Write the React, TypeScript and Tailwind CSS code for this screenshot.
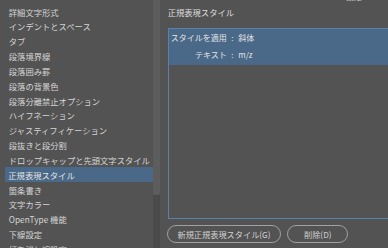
import React from "react";

const items = [
  "詳細文字形式",
  "インデントとスペース",
  "タブ",
  "段落境界線",
  "段落囲み罫",
  "段落の背景色",
  "段落分離禁止オプション",
  "ハイフネーション",
  "ジャスティフィケーション",
  "段抜きと段分割",
  "ドロップキャップと先頭文字スタイル",
  "正規表現スタイル",
  "箇条書き",
  "文字カラー",
  "OpenType 機能",
  "下線設定",
  "打ち消し線設定",
];

export default function App() {
  return (
    <div className="w-[388px] h-[248px] overflow-hidden bg-[#535353] flex font-['Noto_Sans_CJK_JP','Noto_Sans',sans-serif] text-[#d4d4d4]">
      {/* left list */}
      <div className="w-[152.7px] shrink-0 pt-[4.3px] flex flex-col">
        {items.map((t) => {
          const sel = t === "正規表現スタイル";
          return (
            <div
              key={t}
              className={
                sel
                  ? "h-[14.84px] shrink-0 ml-[5px] pl-[3.3px] flex items-center text-[8.3px] leading-none whitespace-nowrap bg-[#4a6888] text-[#e4e4e4]"
                  : "h-[14.84px] shrink-0 ml-[5px] pl-[3.8px] flex items-center text-[8.3px] leading-none whitespace-nowrap"
              }
            >
              {t}
            </div>
          );
        })}
      </div>
      {/* scrollbar */}
      <div className="w-[7.3px] shrink-0 flex flex-col">
        <div className="h-[195px] shrink-0 bg-[#5d5d5d] rounded-b-[3.5px]" />
        <div className="flex-1 bg-[#4a4a4a]" />
      </div>
      {/* right panel */}
      <div className="flex-1 min-w-0 pl-[7.7px] flex flex-col">
        <div className="h-[27.7px] shrink-0 flex items-start">
          <div className="pt-[7px] text-[8.3px] leading-[11.4px] whitespace-nowrap text-[#dedede]">
            正規表現スタイル
          </div>
          <span className="ml-auto mr-[26px] -mt-[7.5px] text-[8px] leading-[8px] whitespace-nowrap text-[#bdbdbd]">
            設定
          </span>
        </div>
        <div className="w-[240px] h-[191.3px] shrink-0 border border-[#5b80aa]">
          <div className="h-[36.3px] bg-[#4a6888] pt-[0.4px] pl-[2px] text-[8px] text-[#e4e4e4]">
            <div className="h-[17.3px] flex items-center leading-none whitespace-nowrap">
              <span className="w-[56px] text-right">スタイルを適用</span>
              <span className="w-[11.6px] text-center">:</span>
              <span>斜体</span>
            </div>
            <div className="h-[17.3px] flex items-center leading-none whitespace-nowrap">
              <span className="w-[56px] text-right">テキスト</span>
              <span className="w-[11.6px] text-center">:</span>
              <span>m/z</span>
            </div>
          </div>
        </div>
        <div className="mt-[6px] flex gap-[6.6px] -ml-[0.4px]">
          <button className="w-[113.4px] h-[17.7px] rounded-full border border-[#a0a0a0] flex items-center justify-center text-[8.2px] leading-none whitespace-nowrap text-[#d2d2d2]">
            新規正規表現スタイル(G)
          </button>
          <button className="w-[61px] h-[17.7px] rounded-full border border-[#a0a0a0] flex items-center justify-center text-[8.2px] leading-none whitespace-nowrap text-[#d2d2d2]">
            削除(D)
          </button>
        </div>
      </div>
    </div>
  );
}
